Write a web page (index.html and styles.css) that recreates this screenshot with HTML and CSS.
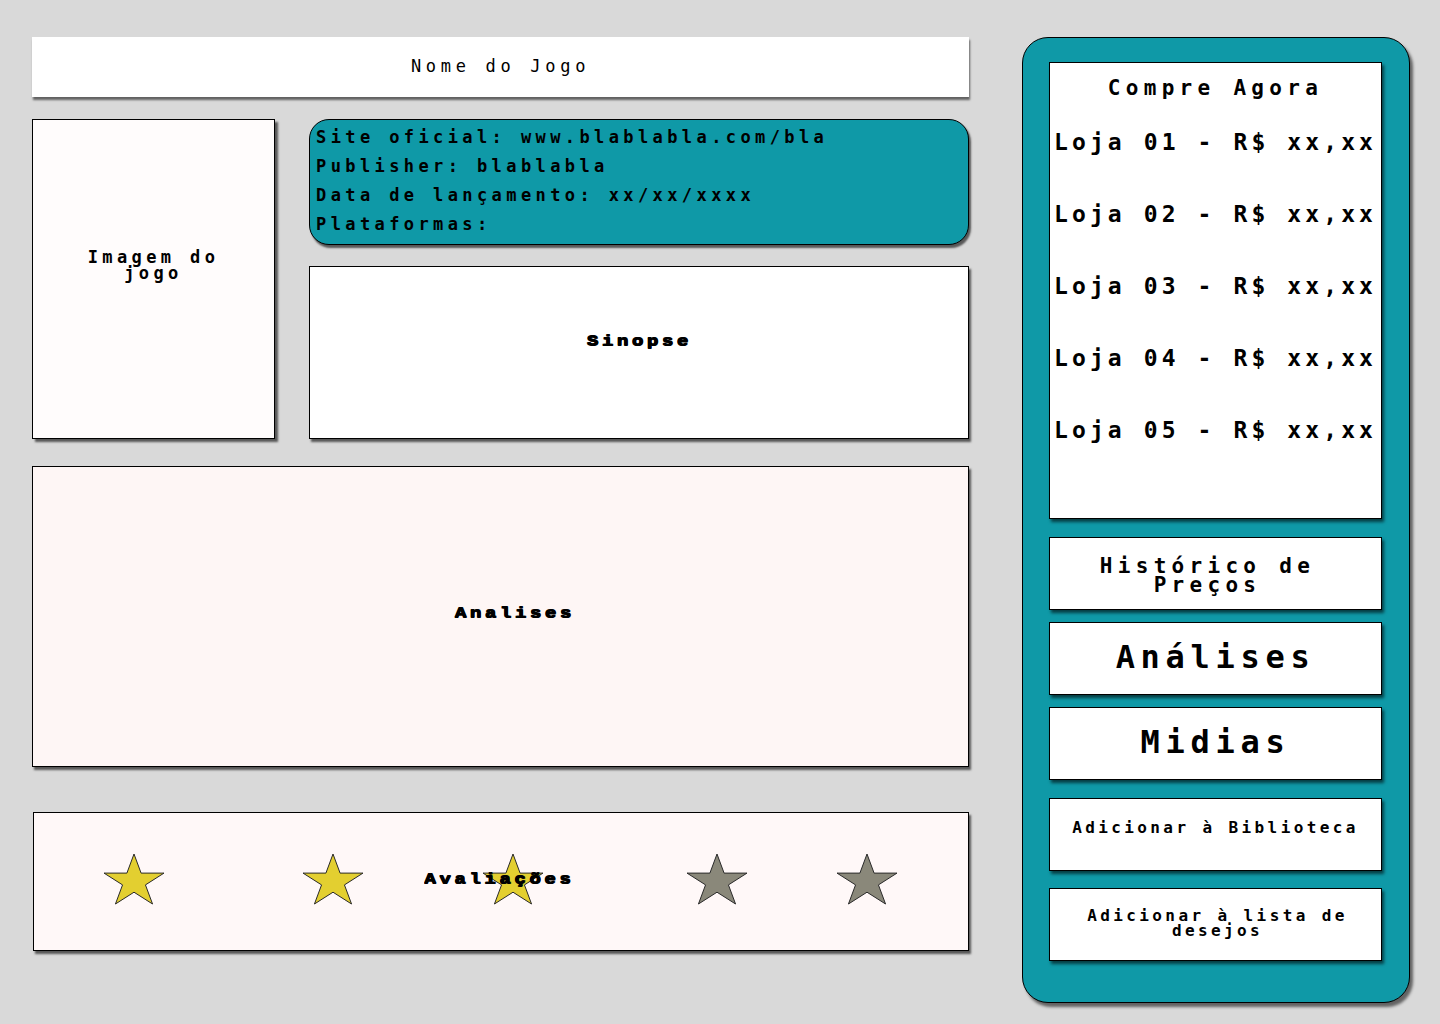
FILE: index.html
```html
<!DOCTYPE html>
<html lang="pt-BR">
<head>
<meta charset="utf-8">
<title>Nome do Jogo</title>
<link rel="stylesheet" href="styles.css">
</head>
<body>
<div class="page">
  <main class="main">
    <header class="title-bar">Nome do Jogo</header>
    <div class="top-row">
      <div class="cover"><span class="cover-text">Imagem do<br>jogo</span></div>
      <div class="details">
        <div class="info">
          <p>Site oficial: www.blablabla.com/bla</p>
          <p>Publisher: blablabla</p>
          <p>Data de lançamento: xx/xx/xxxx</p>
          <p>Plataformas:</p>
        </div>
        <div class="synopsis"><span class="heavy">Sinopse</span></div>
      </div>
    </div>
    <section class="reviews"><span class="heavy">Analises</span></section>
    <section class="ratings">
      <div class="stars">
        <svg class="star s1" viewBox="-1 -1 62 52"><polygon class="on" points="30,0 37.08,19.1 60,19.1 41.45,30.9 48.55,50 30,38.2 11.45,50 18.55,30.9 0,19.1 22.92,19.1"/></svg>
        <svg class="star s2" viewBox="-1 -1 62 52"><polygon class="on" points="30,0 37.08,19.1 60,19.1 41.45,30.9 48.55,50 30,38.2 11.45,50 18.55,30.9 0,19.1 22.92,19.1"/></svg>
        <svg class="star s3" viewBox="-1 -1 62 52"><polygon class="on" points="30,0 37.08,19.1 60,19.1 41.45,30.9 48.55,50 30,38.2 11.45,50 18.55,30.9 0,19.1 22.92,19.1"/></svg>
        <svg class="star s4" viewBox="-1 -1 62 52"><polygon class="off" points="30,0 37.08,19.1 60,19.1 41.45,30.9 48.55,50 30,38.2 11.45,50 18.55,30.9 0,19.1 22.92,19.1"/></svg>
        <svg class="star s5" viewBox="-1 -1 62 52"><polygon class="off" points="30,0 37.08,19.1 60,19.1 41.45,30.9 48.55,50 30,38.2 11.45,50 18.55,30.9 0,19.1 22.92,19.1"/></svg>
      </div>
      <span class="heavy ratings-label">Avaliações</span>
    </section>
  </main>
  <aside class="sidebar">
    <div class="buy">
      <h2 class="buy-title">Compre Agora</h2>
      <p class="store">Loja 01 - R$ xx,xx</p>
      <p class="store">Loja 02 - R$ xx,xx</p>
      <p class="store">Loja 03 - R$ xx,xx</p>
      <p class="store">Loja 04 - R$ xx,xx</p>
      <p class="store">Loja 05 - R$ xx,xx</p>
    </div>
    <div class="side-btn history">Histórico de<br>Preços</div>
    <div class="side-btn big">Análises</div>
    <div class="side-btn big">Midias</div>
    <div class="side-btn small library">Adicionar à Biblioteca</div>
    <div class="side-btn small wishlist">Adicionar à lista de<br>desejos</div>
  </aside>
</div>
</body>
</html>
```
FILE: styles.css
```css
* { box-sizing: border-box; }
html, body { margin: 0; padding: 0; }
body {
  background: #d9d9d9;
  font-family: "DejaVu Sans Mono", "Liberation Mono", monospace;
  color: #000;
  width: 1440px;
  height: 1024px;
  overflow: hidden;
}
p, h2 { margin: 0; }

.page {
  display: flex;
  align-items: flex-start;
  padding: 37px 0 0 32px;
}

.main {
  width: 937px;
  display: flex;
  flex-direction: column;
}

.title-bar {
  height: 60px;
  background: #ffffff;
  box-shadow: 1px 3px 2px rgba(0, 0, 0, 0.55);
  display: flex;
  align-items: center;
  justify-content: center;
  font-size: 17px;
  letter-spacing: 4.7px;
  padding-bottom: 3px;
}

.top-row {
  display: flex;
  margin-top: 22px;
  gap: 34px;
}

.cover {
  width: 243px;
  height: 320px;
  background: #fffcfc;
  border: 1px solid #000;
  box-shadow: 3px 3px 2px rgba(0, 0, 0, 0.6);
  display: flex;
  align-items: center;
  justify-content: center;
  padding-bottom: 28px;
  text-align: center;
}
.cover-text {
  font-size: 17px;
  font-weight: bold;
  letter-spacing: 4.4px;
  line-height: 16px;
}

.details {
  width: 660px;
  display: flex;
  flex-direction: column;
  gap: 21px;
}

.info {
  height: 126px;
  background: #0f99a7;
  border: 1px solid #000;
  border-radius: 20px;
  box-shadow: 2px 3px 2px rgba(0, 0, 0, 0.6);
  padding: 3px 6px;
  font-size: 17px;
  font-weight: bold;
  letter-spacing: 4.4px;
  line-height: 29px;
}

.synopsis {
  height: 173px;
  background: #ffffff;
  border: 1px solid #000;
  box-shadow: 2px 3px 2px rgba(0, 0, 0, 0.6);
  display: flex;
  align-items: center;
  justify-content: center;
  padding-bottom: 24px;
}

.heavy {
  font-family: "Liberation Mono", "DejaVu Sans Mono", monospace;
  font-weight: bold;
  font-size: 19px;
  letter-spacing: 3.6px;
  text-shadow: 1px 0 0 #000, 0 1px 0 #000, 1px 1px 0 #000;
  transform: scaleY(0.8);
  display: inline-block;
}

.reviews {
  margin-top: 27px;
  height: 301px;
  background: #fef6f5;
  border: 1px solid #000;
  box-shadow: 2px 3px 2px rgba(0, 0, 0, 0.6);
  display: flex;
  align-items: center;
  justify-content: center;
  padding: 0 0 8px 28px;
}

.ratings {
  position: relative;
  margin: 45px 0 0 1px;
  height: 139px;
  background: #fff8f8;
  border: 1px solid #000;
  box-shadow: 2px 3px 2px rgba(0, 0, 0, 0.6);
  display: flex;
  align-items: center;
}
.stars {
  display: flex;
  align-items: center;
  padding-left: 69px;
  padding-bottom: 5px;
}
.star { width: 62px; height: 52px; display: block; }
.s2 { margin-left: 137px; }
.s3 { margin-left: 118px; }
.s4 { margin-left: 142px; }
.s5 { margin-left: 88px; }
.star polygon { stroke: #2a2a2a; stroke-width: 1; }
.star .on { fill: #e3cf30; }
.star .off { fill: #8a887a; }

.ratings-label {
  position: absolute;
  left: 390px;
  top: 55px;
}

.sidebar {
  margin-left: 53px;
  width: 388px;
  height: 966px;
  background: #0f99a7;
  border: 1px solid #000;
  border-radius: 26px;
  box-shadow: 3px 4px 3px rgba(0, 0, 0, 0.55);
  padding: 24px 27px 0 26px;
  display: flex;
  flex-direction: column;
}

.buy {
  height: 457px;
  background: #ffffff;
  border: 1px solid #000;
  box-shadow: 2px 3px 3px rgba(0, 0, 0, 0.6);
  padding: 12px 0 0 4px;
}
.buy-title {
  font-size: 21px;
  font-weight: bold;
  letter-spacing: 5.3px;
  text-align: center;
  line-height: 26px;
  margin-bottom: 27px;
  padding-right: 4px;
}
.store {
  font-size: 23px;
  font-weight: bold;
  letter-spacing: 4.1px;
  line-height: 28px;
  margin-bottom: 44px;
  white-space: nowrap;
}

.side-btn {
  height: 73px;
  background: #ffffff;
  border: 1px solid #000;
  box-shadow: 2px 3px 3px rgba(0, 0, 0, 0.6);
  display: flex;
  align-items: center;
  justify-content: center;
  text-align: center;
  font-weight: bold;
}
.history {
  margin-top: 18px;
  font-size: 21px;
  letter-spacing: 5.3px;
  line-height: 19px;
  padding: 4px 16px 0 0;
}
.big {
  margin-top: 12px;
  font-size: 32px;
  letter-spacing: 5.7px;
  padding-bottom: 4px;
}
.small {
  font-size: 16px;
  letter-spacing: 3.4px;
  line-height: 15px;
}
.library {
  margin-top: 18px;
  padding-bottom: 14px;
}
.wishlist {
  margin-top: 17px;
  padding: 0 0 4px 4px;
}
```
